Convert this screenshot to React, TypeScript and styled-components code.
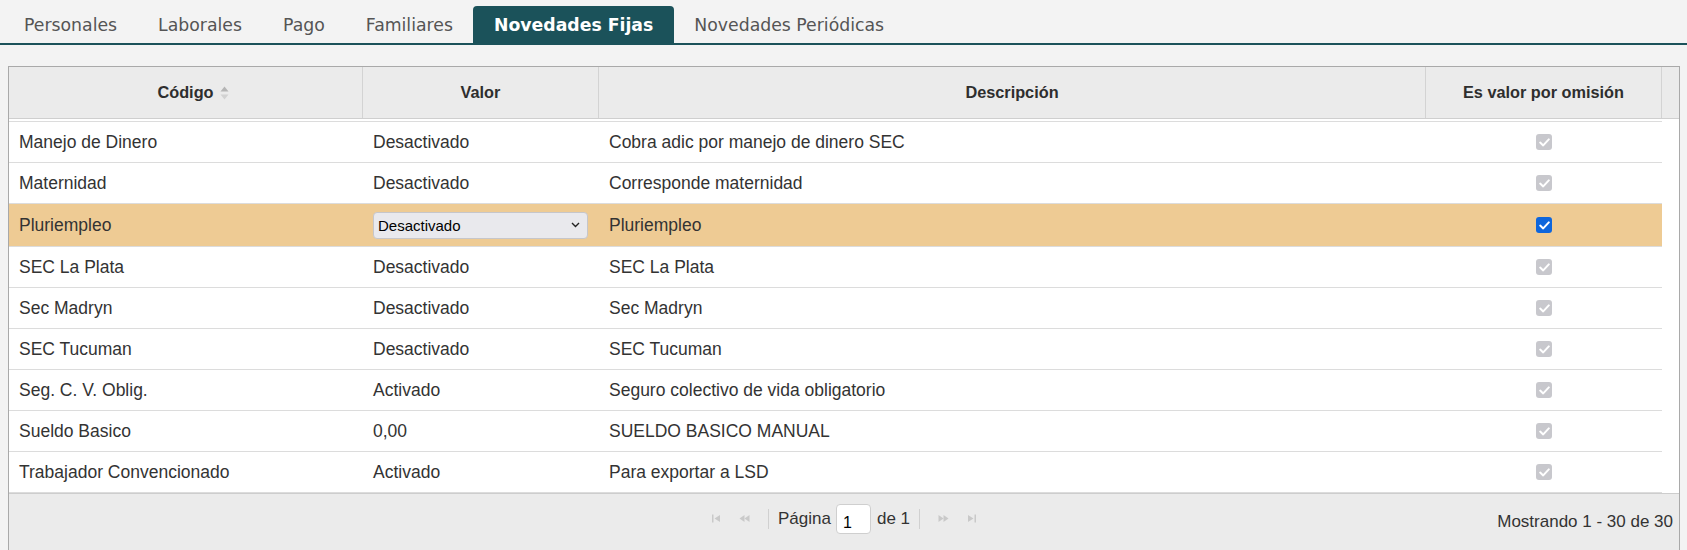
import styled, { createGlobalStyle } from "styled-components";

const GlobalStyle = createGlobalStyle`
  html, body {
    margin: 0;
    padding: 0;
    background: #f3f3f3;
  }
  body {
    font-family: "Liberation Sans", Arial, sans-serif;
    color: #333;
  }
`;

const TEAL = "#1b525a";

const Page = styled.div`
  width: 1687px;
  height: 550px;
  overflow: hidden;
`;

const TabBar = styled.div`
  display: flex;
  padding: 6px 0 0 3.5px;
  border-bottom: 2px solid ${TEAL};
`;

const Tab = styled.div<{ $active?: boolean }>`
  height: 37px;
  padding: 0 20.5px;
  display: flex;
  align-items: center;
  font-family: "DejaVu Sans", Verdana, sans-serif;
  font-size: 17.3px;
  font-weight: ${(p) => (p.$active ? 700 : 400)};
  color: ${(p) => (p.$active ? "#fff" : "#555")};
  background: ${(p) => (p.$active ? TEAL : "transparent")};
  border-radius: 4px 4px 0 0;
  white-space: nowrap;
`;

const Grid = styled.div`
  margin: 21px 7px 0 8px;
  border: 1px solid #a9a9a9;
  border-bottom: none;
  background: #fff;
`;

const HeadRow = styled.div`
  display: grid;
  grid-template-columns: 354px 236px 827px 236px 17px;
  height: 51px;
  background: #ebebeb;
  border-bottom: 1px solid #cfcfcf;
`;

const HeadCell = styled.div`
  display: flex;
  align-items: center;
  justify-content: center;
  font-weight: 700;
  font-size: 16.3px;
  color: #2e2e2e;
  border-right: 1px solid #d3d3d3;
  &:last-child {
    border-right: none;
  }
`;

const SortIcon = styled.span`
  display: inline-flex;
  margin-left: 6px;
  margin-right: -15px;
`;

const Body = styled.div`
  width: 1653px;
`;

const Spacer = styled.div`
  height: 2px;
  border-bottom: 1px solid #dcdcdc;
`;

const Row = styled.div<{ $selected?: boolean }>`
  display: grid;
  grid-template-columns: 354px 236px 827px 236px;
  height: ${(p) => (p.$selected ? 42 : 40)}px;
  border-bottom: 1px solid #dcdcdc;
  background: ${(p) => (p.$selected ? "#eecb94" : "#fff")};
`;

const Cell = styled.div<{ $center?: boolean }>`
  display: flex;
  align-items: center;
  justify-content: ${(p) => (p.$center ? "center" : "flex-start")};
  padding: 0 10px;
  font-size: 17.5px;
  color: #333;
  white-space: nowrap;
  overflow: hidden;
`;

const SelectWrap = styled.div`
  position: relative;
  width: 215px;
  height: 27px;
`;

const Select = styled.select`
  appearance: none;
  width: 100%;
  height: 100%;
  margin: 0;
  padding: 0 20px 0 4px;
  box-sizing: border-box;
  background: #e9e9ed;
  border: 1px solid #c6c6ca;
  border-radius: 4px;
  font-family: "Liberation Sans", Arial, sans-serif;
  font-size: 15px;
  color: #000;
`;

const Chevron = styled.svg`
  position: absolute;
  right: 8px;
  top: 10px;
  pointer-events: none;
`;

const Check = styled.span<{ $on?: boolean }>`
  width: 16px;
  height: 16px;
  border-radius: 3px;
  display: inline-flex;
  align-items: center;
  justify-content: center;
  background: ${(p) => (p.$on ? "#0e66dc" : "#c8c8cd")};
`;

const Pager = styled.div`
  display: grid;
  grid-template-columns: 1fr auto 1fr;
  height: 57px;
  background: #ebebeb;
  border-top: 1px solid #cdcdcd;
  font-size: 17px;
  color: #333;
`;

const PagerCenter = styled.div`
  display: flex;
  align-items: center;
  padding-bottom: 8px;
`;

const PagerBtn = styled.span`
  display: inline-flex;
  width: 28px;
  justify-content: center;
`;

const PagerSep = styled.span`
  width: 1px;
  height: 20px;
  background: #d0d0d0;
  margin: 0 9px;
`;

const PageInput = styled.div`
  width: 35px;
  height: 30px;
  box-sizing: border-box;
  margin: 0 6px 0 5px;
  background: #fff;
  border: 1px solid #cfcfcf;
  border-radius: 4px;
  padding: 8px 0 0 6px;
  font-size: 16px;
  color: #000;
  line-height: 20px;
`;

const PagerInfo = styled.div`
  display: flex;
  align-items: center;
  justify-content: flex-end;
  padding: 0 6px 2px 0;
`;

const rows = [
  { code: "Manejo de Dinero", valor: "Desactivado", desc: "Cobra adic por manejo de dinero SEC" },
  { code: "Maternidad", valor: "Desactivado", desc: "Corresponde maternidad" },
  { code: "Pluriempleo", valor: "Desactivado", desc: "Pluriempleo", editing: true },
  { code: "SEC La Plata", valor: "Desactivado", desc: "SEC La Plata" },
  { code: "Sec Madryn", valor: "Desactivado", desc: "Sec Madryn" },
  { code: "SEC Tucuman", valor: "Desactivado", desc: "SEC Tucuman" },
  { code: "Seg. C. V. Oblig.", valor: "Activado", desc: "Seguro colectivo de vida obligatorio" },
  { code: "Sueldo Basico", valor: "0,00", desc: "SUELDO BASICO MANUAL" },
  { code: "Trabajador Convencionado", valor: "Activado", desc: "Para exportar a LSD" },
];

const tabs = ["Personales", "Laborales", "Pago", "Familiares", "Novedades Fijas", "Novedades Periódicas"];

const Tick = () => (
  <svg width="11" height="9" viewBox="0 0 11 9">
    <path d="M1.2 4.6 L4.2 7.4 L9.8 1.4" fill="none" stroke="#fff" strokeWidth="2" strokeLinecap="round" strokeLinejoin="round" />
  </svg>
);

const PagerIcon = ({ dir, end }: { dir: "l" | "r"; end?: boolean }) => (
  <svg width="12" height="9" viewBox="0 0 12 9">
    <g fill="#c9c9c9" transform={dir === "r" ? "translate(12 0) scale(-1 1)" : undefined}>
      {end ? (
        <>
          <rect x="1" y="0.5" width="1.5" height="8" />
          <path d="M3.5 4.5 L9 1 V8 Z" />
        </>
      ) : (
        <>
          <path d="M0.5 4.5 L5.5 1 V8 Z" />
          <path d="M5.5 4.5 L10.5 1 V8 Z" />
        </>
      )}
    </g>
  </svg>
);

export default function App() {
  return (
    <Page>
      <GlobalStyle />
      <TabBar>
        {tabs.map((t) => (
          <Tab key={t} $active={t === "Novedades Fijas"}>
            {t}
          </Tab>
        ))}
      </TabBar>
      <Grid>
        <HeadRow>
          <HeadCell>
            Código
            <SortIcon>
              <svg width="9" height="14" viewBox="0 0 9 14">
                <path d="M4.5 0.5 L8.5 5.5 H0.5 Z" fill="#b5b5b5" />
                <path d="M4.5 13.5 L8.5 8.5 H0.5 Z" fill="#d2d2d2" />
              </svg>
            </SortIcon>
          </HeadCell>
          <HeadCell>Valor</HeadCell>
          <HeadCell>Descripción</HeadCell>
          <HeadCell>Es valor por omisión</HeadCell>
          <HeadCell />
        </HeadRow>
        <Body>
          <Spacer />
          {rows.map((r) => (
            <Row key={r.code} $selected={r.editing}>
              <Cell>{r.code}</Cell>
              <Cell>
                {r.editing ? (
                  <SelectWrap>
                    <Select defaultValue="Desactivado">
                      <option>Desactivado</option>
                      <option>Activado</option>
                    </Select>
                    <Chevron width="9" height="6" viewBox="0 0 9 6">
                      <path d="M1 1 L4.5 4.5 L8 1" fill="none" stroke="#222" strokeWidth="1.4" />
                    </Chevron>
                  </SelectWrap>
                ) : (
                  r.valor
                )}
              </Cell>
              <Cell>{r.desc}</Cell>
              <Cell $center>
                <Check $on={r.editing}>
                  <Tick />
                </Check>
              </Cell>
            </Row>
          ))}
        </Body>
        <Pager>
          <div />
          <PagerCenter>
            <PagerBtn>
              <PagerIcon dir="l" end />
            </PagerBtn>
            <PagerBtn>
              <PagerIcon dir="l" />
            </PagerBtn>
            <PagerSep />
            Página
            <PageInput>1</PageInput>
            de 1
            <PagerSep />
            <PagerBtn>
              <PagerIcon dir="r" />
            </PagerBtn>
            <PagerBtn>
              <PagerIcon dir="r" end />
            </PagerBtn>
          </PagerCenter>
          <PagerInfo>Mostrando 1 - 30 de 30</PagerInfo>
        </Pager>
      </Grid>
    </Page>
  );
}
